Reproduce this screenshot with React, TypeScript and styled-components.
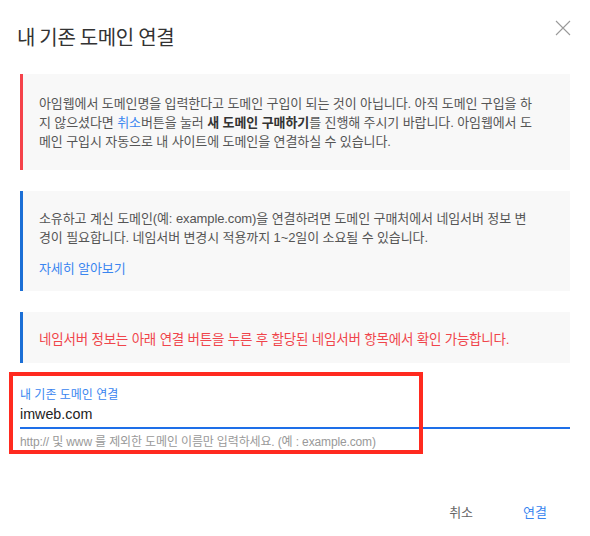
import React from "react";
import styled, { createGlobalStyle } from "styled-components";

const GlobalStyle = createGlobalStyle`
  html, body {
    margin: 0;
    padding: 0;
    background: #fff;
  }
  body {
    font-family: "Liberation Sans", "Noto Sans CJK KR", sans-serif;
    -webkit-font-smoothing: antialiased;
  }
`;

const Dialog = styled.div`
  width: 590px;
  height: 536px;
  box-sizing: border-box;
  padding: 24px 20px 0 20px;
  display: flex;
  flex-direction: column;
`;

const Header = styled.div`
  display: flex;
  align-items: flex-start;
  justify-content: space-between;
  margin-left: -3px;
  margin-bottom: 24px;
`;

const Title = styled.h2`
  margin: 0;
  font-family: "Noto Sans CJK KR", sans-serif;
  font-size: 20px;
  font-weight: 400;
  line-height: 26px;
  color: #333;
  letter-spacing: -0.3px;
`;

const CloseButton = styled.button`
  border: 0;
  background: none;
  padding: 0;
  margin: -4px -2px 0 0;
  width: 18px;
  height: 18px;
  cursor: pointer;
  color: #9a9a9a;
`;

const Callout = styled.div<{ $accent: string; $pad: string }>`
  background: #f8f8f8;
  border-left: 3px solid ${(p) => p.$accent};
  padding: ${(p) => p.$pad};
  margin-bottom: 21px;
  font-size: 13px;
  line-height: 19px;
  letter-spacing: -0.1px;
  color: #555;
  word-break: break-all;
`;

const Para = styled.p<{ $tone?: "red" }>`
  margin: 0;
  color: ${(p) => (p.$tone === "red" ? "#f0454b" : "inherit")};
  font-size: ${(p) => (p.$tone === "red" ? "13.5px" : "inherit")};
  letter-spacing: ${(p) => (p.$tone === "red" ? "-0.2px" : "inherit")};
`;

const Strong = styled.b`
  color: #333;
`;

const Link = styled.a`
  color: #3a86f0;
  text-decoration: none;
`;

const MoreLink = styled.a`
  display: inline-block;
  margin-top: 12px;
  color: #3a86f0;
  text-decoration: none;
  font-size: 13px;
`;

const Field = styled.div`
  position: relative;
  display: flex;
  flex-direction: column;
`;

const FieldLabel = styled.label`
  margin-top: 3px;
  font-size: 12px;
  line-height: 16px;
  color: #3a86f0;
`;

const FieldInput = styled.input`
  border: 0;
  border-bottom: 2px solid #1e6fe8;
  outline: none;
  padding: 3px 0 4px;
  font-family: "Liberation Sans", "Noto Sans CJK KR", sans-serif;
  font-size: 14.3px;
  line-height: 17px;
  color: #222;
  background: transparent;
`;

const Hint = styled.div`
  margin-top: 5px;
  font-size: 12px;
  line-height: 16px;
  letter-spacing: -0.14px;
  color: #999;
`;

const Highlight = styled.div`
  position: absolute;
  left: -11px;
  top: -12px;
  width: 414px;
  height: 82px;
  box-sizing: border-box;
  border: 4px solid #ff2a1f;
  pointer-events: none;
`;

const Footer = styled.div`
  margin-top: auto;
  height: 42px;
  display: flex;
  justify-content: flex-end;
  align-items: flex-start;
  gap: 26px;
  padding-right: 11px;
`;

const FooterButton = styled.button<{ $primary?: boolean }>`
  border: 0;
  background: none;
  padding: 8px 12px;
  font-family: "Noto Sans CJK KR", sans-serif;
  font-size: 13px;
  line-height: 19px;
  color: ${(p) => (p.$primary ? "#3a86f0" : "#666")};
  cursor: pointer;
`;

const App: React.FC = () => {
  return (
    <>
      <GlobalStyle />
      <Dialog>
        <Header>
          <Title>내 기존 도메인 연결</Title>
          <CloseButton aria-label="닫기">
            <svg width="16" height="16" viewBox="0 0 16 16" fill="none" stroke="currentColor" strokeWidth="1.1">
              <path d="M1 1L15 15M15 1L1 15" />
            </svg>
          </CloseButton>
        </Header>

        <Callout $accent="#f5424a" $pad="20px 18px 19px 16px">
          <Para>
            아임웹에서 도메인명을 입력한다고 도메인 구입이 되는 것이 아닙니다. 아직 도메인 구입을 하<br />
            지 않으셨다면 <Link href="#">취소</Link>버튼을 눌러 <Strong>새 도메인 구매하기</Strong>를 진행해 주시기
            바랍니다. 아임웹에서 도<br />
            메인 구입시 자동으로 내 사이트에 도메인을 연결하실 수 있습니다.
          </Para>
        </Callout>

        <Callout $accent="#1b6fd6" $pad="18px 18px 13px 16px">
          <Para>
            소유하고 계신 도메인(예: example.com)을 연결하려면 도메인 구매처에서 네임서버 정보 변<br />
            경이 필요합니다. 네임서버 변경시 적용까지 1~2일이 소요될 수 있습니다.
          </Para>
          <MoreLink href="#">자세히 알아보기</MoreLink>
        </Callout>

        <Callout $accent="#1b6fd6" $pad="18px 18px 14px 16px">
          <Para $tone="red">네임서버 정보는 아래 연결 버튼을 누른 후 할당된 네임서버 항목에서 확인 가능합니다.</Para>
        </Callout>

        <Field>
          <FieldLabel>내 기존 도메인 연결</FieldLabel>
          <FieldInput defaultValue="imweb.com" />
          <Hint>http:// 및 www 를 제외한 도메인 이름만 입력하세요. (예 : example.com)</Hint>
          <Highlight />
        </Field>

        <Footer>
          <FooterButton>취소</FooterButton>
          <FooterButton $primary>연결</FooterButton>
        </Footer>
      </Dialog>
    </>
  );
};

export default App;
